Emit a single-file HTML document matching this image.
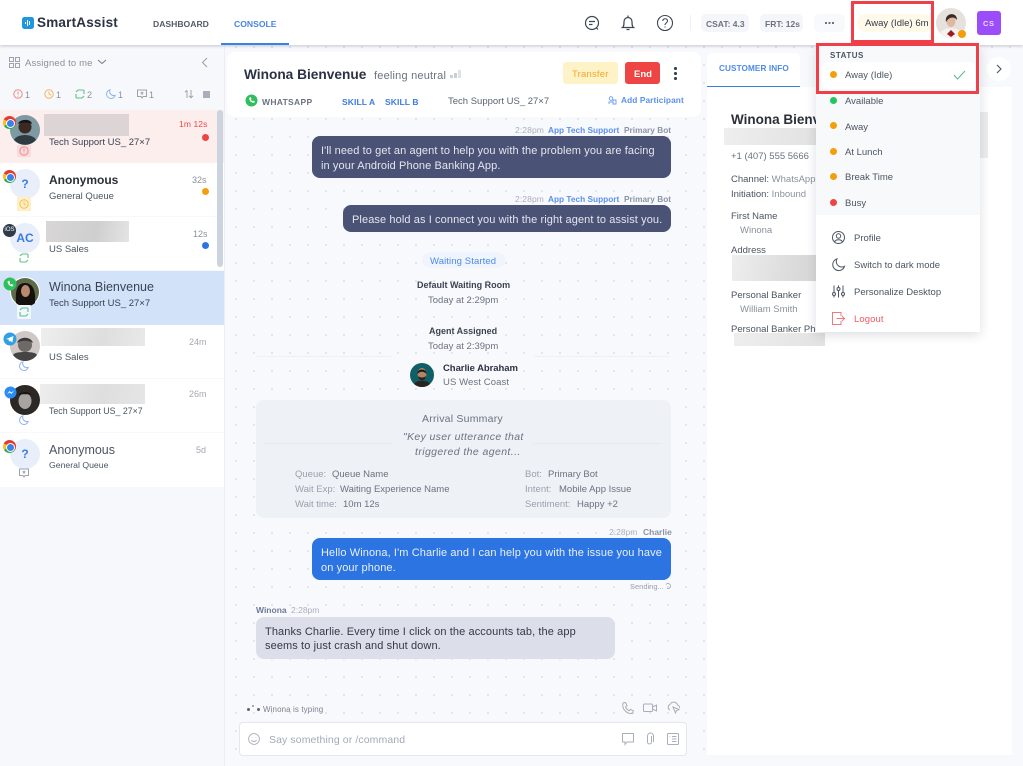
<!DOCTYPE html>
<html><head><meta charset="utf-8"><title>SmartAssist</title>
<style>
*{box-sizing:border-box}
html,body{margin:0;padding:0;width:1023px;height:766px;overflow:hidden;background:#f8f9fc;font-family:"Liberation Sans",sans-serif;color:#4b5563}
body{filter:blur(.3px)}
.a{position:absolute}
.t{position:absolute;white-space:nowrap;line-height:14px;height:14px;font-size:10px;margin-top:1px}
.b{font-weight:bold}
svg{position:absolute;overflow:visible;fill:none}
.c{position:absolute;width:13px;height:13px;border-radius:50%;background:conic-gradient(#e33b2e 0 33%,#2fa84f 33% 66%,#f8c022 66% 83%,#e33b2e 83%)}
.c:after{content:"";position:absolute;left:3px;top:3px;width:7px;height:7px;border-radius:50%;background:#3b82e6;border:1.2px solid #fff}
.blur{position:absolute;background:linear-gradient(100deg,#e9e9ea,#d8d8d8 50%,#ededed)}
.av{position:absolute;width:30px;height:30px;border-radius:50%;background:#e8effb;color:#3b7be0;text-align:center;line-height:30px;font-weight:bold}
.dot{position:absolute;width:7px;height:7px;border-radius:50%}
.g{color:#8a919e}
.msg{font-size:11px;letter-spacing:.1px}
</style></head><body>

<!-- chat background -->
<div class="a" style="left:226px;top:45px;width:797px;height:721px;background-color:#f8f9fc;background-image:radial-gradient(circle at 1px 1px,#dcdfe7 .8px,transparent 1.1px);background-size:18px 18px;background-position:9px 1px"></div>

<!-- left panel -->
<div class="a" style="left:0;top:45px;width:225px;height:721px;background:#f7f8fb;border-right:1px solid #eceef3"></div>
<svg style="left:9px;top:57px" width="12" height="12" stroke="#9ca3af" stroke-width="1"><rect x=".5" y=".5" width="4" height="4"/><rect x="6.5" y=".5" width="4" height="4"/><rect x=".5" y="6.5" width="4" height="4"/><rect x="6.5" y="6.5" width="4" height="4"/></svg>
<div class="t g" style="left:25px;top:55px;font-size:9.5px;letter-spacing:.15px;margin-top:2px">Assigned to me</div>
<svg style="left:97px;top:59px" width="10" height="6" stroke="#7b8290" stroke-width="1.1"><path d="M1 1l4 3.5L9 1"/></svg>
<svg style="left:201px;top:57px" width="7" height="11" stroke="#9ca3af" stroke-width="1.1"><path d="M6 1L1.5 5.5 6 10"/></svg>

<svg style="left:13px;top:89px" width="10" height="10" stroke="#f08a8a" stroke-width="1"><circle cx="5" cy="5" r="4.2"/><path d="M5 2.5v3M5 6.8v.8"/></svg>
<div class="t g" style="left:25px;top:87px;font-size:9px">1</div>
<svg style="left:44px;top:89px" width="10" height="10" stroke="#f4b45c" stroke-width="1"><circle cx="5" cy="5" r="4.2"/><path d="M5 2.5V5l2 1.2"/></svg>
<div class="t g" style="left:56px;top:87px;font-size:9px">1</div>
<svg style="left:75px;top:89px" width="10" height="10" stroke="#5cc184" stroke-width="1.1"><path d="M3 1h5a1 1 0 0 1 1 1v3M7 9H2a1 1 0 0 1-1-1V5M1 3l2-2M7 9l2-2"/></svg>
<div class="t g" style="left:87px;top:87px;font-size:9px">2</div>
<svg style="left:106px;top:89px" width="10" height="10" stroke="#8fb3ef" stroke-width="1"><path d="M4 .8a4.4 4.4 0 1 0 5.2 5.6A4.2 4.2 0 0 1 4 .8z"/></svg>
<div class="t g" style="left:118px;top:87px;font-size:9px">1</div>
<svg style="left:137px;top:89px" width="10" height="10" stroke="#9ca3af" stroke-width="1"><path d="M.5 1h9v6.5H6L5 9 4 7.5H.5zM3.8 3l2.4 2.4M6.2 3L3.8 5.4"/></svg>
<div class="t g" style="left:149px;top:87px;font-size:9px">1</div>
<svg style="left:184px;top:89px" width="10" height="10" stroke="#9ca3af" stroke-width="1"><path d="M3 9V1.5M1 3.2l2-2M7 1v7.5M5 6.8l2 2 2-2"/></svg>
<div class="a" style="left:203px;top:91px;width:7px;height:7px;background:#a9afba"></div>

<!-- rows -->
<div class="a" style="left:0;top:110px;width:224px;height:53px;background:#fdeeee"></div>
<div class="a" style="left:0;top:163px;width:224px;height:53px;background:#fff"></div>
<div class="a" style="left:0;top:217px;width:224px;height:53px;background:#fff"></div>
<div class="a" style="left:0;top:271px;width:224px;height:54px;background:#d2e2f9"></div>
<div class="a" style="left:0;top:325px;width:224px;height:53px;background:#fff"></div>
<div class="a" style="left:0;top:379px;width:224px;height:53px;background:#fff"></div>
<div class="a" style="left:0;top:433px;width:224px;height:54px;background:#fff"></div>
<div class="a" style="left:217px;top:110px;width:6px;height:157px;border-radius:3px;background:#ccd4df"></div>

<!-- row 1 -->
<svg style="left:10px;top:115px" width="30" height="30"><circle cx="15" cy="15" r="15" fill="#7d9aa3"/><path d="M4 25c1-3 6-5 11-5s10 2 11 5a15 15 0 0 1-22 0z" fill="#2e3b40"/><circle cx="15" cy="12" r="6.5" fill="#3c2a22"/><path d="M8 9c1-5 13-6 14 0-3-2-11-2-14 0z" fill="#141414"/></svg>
<div class="c" style="left:3px;top:116px"></div>
<div class="a" style="left:17px;top:145px;width:14px;height:12px;background:#fbdcdc"></div>
<svg style="left:19px;top:146px" width="10" height="10" stroke="#ef8a8a"><circle cx="5" cy="5" r="4.2"/><path d="M5 2.5v3M5 6.8v.8"/></svg>
<div class="blur" style="left:44px;top:114px;width:85px;height:22px;background:#ddd5d5"></div>
<div class="t" style="left:49px;top:135px;font-size:9.5px;color:#374151">Tech Support US_ 27×7</div>
<div class="t" style="left:179px;top:116px;font-size:8.5px;color:#ef4444;letter-spacing:.1px">1m 12s</div>
<div class="dot" style="left:202px;top:134px;background:#ef4444"></div>

<!-- row 2 -->
<div class="av" style="left:10px;top:169px;font-size:12px">?</div>
<div class="c" style="left:3px;top:170px"></div>
<div class="a" style="left:17px;top:197px;width:14px;height:14px;background:#fdf0c8"></div>
<svg style="left:19px;top:199px" width="10" height="10" stroke="#f5c04f"><circle cx="5" cy="5" r="4.2"/><path d="M5 2.5V5l2 1.2"/></svg>
<div class="t b" style="left:49px;top:172px;font-size:12px;color:#2b2f38">Anonymous</div>
<div class="t" style="left:49px;top:189px;font-size:9.5px;color:#4b5563">General Queue</div>
<div class="t g" style="left:192px;top:172px;font-size:9px">32s</div>
<div class="dot" style="left:202px;top:188px;background:#f59e0b"></div>

<!-- row 3 -->
<div class="av" style="left:10px;top:223px;font-size:12px">AC</div>
<div class="a" style="left:3px;top:224px;width:13px;height:13px;border-radius:50%;background:#2f3a4b;color:#fff;font-size:6px;line-height:13px;text-align:center">iOS</div>
<svg style="left:19px;top:253px" width="10" height="10" stroke="#5cc184" stroke-width="1.1"><path d="M3 1h5a1 1 0 0 1 1 1v3M7 9H2a1 1 0 0 1-1-1V5M1 3l2-2M7 9l2-2"/></svg>
<div class="blur" style="left:46px;top:221px;width:83px;height:21px;background:linear-gradient(100deg,#d8d6d6,#cfcfcf 60%,#e4e4e4)"></div>
<div class="t" style="left:49px;top:242px;font-size:9.5px;color:#4b5563">US Sales</div>
<div class="t g" style="left:193px;top:226px;font-size:9px">12s</div>
<div class="dot" style="left:202px;top:242px;background:#2b74e2"></div>

<!-- row 4 -->
<svg style="left:10px;top:277px" width="30" height="30"><circle cx="15" cy="15" r="15" fill="#fff"/><circle cx="15" cy="15" r="14" fill="#5d6b4a"/><path d="M6 26c-1-12 1-20 9-20s11 8 10 20a14 14 0 0 1-19 0z" fill="#15110f"/><ellipse cx="15.5" cy="14" rx="4.500" ry="6" fill="#b98a70"/></svg>
<svg style="left:3px;top:277px" width="14" height="14"><circle cx="7" cy="7" r="6.5" fill="#2fbf5c"/><path d="M4.5 4.5c.5 3 2 4.500 5 5l1-1.500-2-1-.8.7c-.6-.3-1-.8-1.300-1.400l.7-.8-1-2z" fill="#fff"/></svg>
<div class="a" style="left:17px;top:305px;width:14px;height:14px;background:#f2f7fd;border-radius:1px"></div>
<svg style="left:19px;top:307px" width="10" height="10" stroke="#5cc184" stroke-width="1.1"><path d="M3 1h5a1 1 0 0 1 1 1v3M7 9H2a1 1 0 0 1-1-1V5M1 3l2-2M7 9l2-2"/></svg>
<div class="t" style="left:49px;top:279px;font-size:12.5px;color:#3b4352">Winona Bienvenue</div>
<div class="t" style="left:49px;top:296px;font-size:9.5px;color:#374151">Tech Support US_ 27×7</div>

<!-- row 5 -->
<svg style="left:10px;top:331px" width="30" height="30"><circle cx="15" cy="15" r="15" fill="#cfc8c6"/><path d="M3 24c1-2 5-3 12-3s11 1 12 3a15 15 0 0 1-24 0z" fill="#444"/><circle cx="15" cy="14" r="7" fill="#6d6a68"/><path d="M7 12c2-7 14-7 16 0-4-3-12-3-16 0z" fill="#3b3937"/></svg>
<svg style="left:3px;top:332px" width="14" height="14"><circle cx="7" cy="7" r="6.500" fill="#2f9fe6"/><path d="M3 7l7.500-3-1.200 6.500-2.300-1.700-1 1-.3-2.300z" fill="#fff"/></svg>
<svg style="left:19px;top:361px" width="10" height="10" stroke="#8fb3ef"><path d="M4 .8a4.400 4.400 0 1 0 5.200 5.600A4.200 4.200 0 0 1 4 .8z"/></svg>
<div class="blur" style="left:41px;top:328px;width:104px;height:18px;background:linear-gradient(100deg,#eee,#dedede 60%,#e9e9e9)"></div>
<div class="t" style="left:49px;top:350px;font-size:9.5px;color:#4b5563">US Sales</div>
<div class="t" style="left:189px;top:334px;font-size:9px;color:#a3a8b2">24m</div>

<!-- row 6 -->
<svg style="left:10px;top:385px" width="30" height="30"><circle cx="15" cy="15" r="15" fill="#2c2826"/><ellipse cx="15" cy="16" rx="6.500" ry="8" fill="#a8a4a2"/><path d="M8 10c3-4 11-4 14 0-4-1-10-1-14 0z" fill="#1a1816"/></svg>
<svg style="left:4px;top:386px" width="13" height="13"><circle cx="6.500" cy="6.500" r="6" fill="#2a8cf5"/><path d="M3 8l2.500-3 1.800 1.500L10 4.500 7.500 8 5.700 6.500z" fill="#fff"/></svg>
<svg style="left:19px;top:415px" width="10" height="10" stroke="#8fb3ef"><path d="M4 .8a4.400 4.400 0 1 0 5.200 5.600A4.200 4.200 0 0 1 4 .8z"/></svg>
<div class="blur" style="left:40px;top:384px;width:105px;height:20px;background:linear-gradient(100deg,#ededed,#dedede 60%,#e6e6e6)"></div>
<div class="t" style="left:49px;top:403px;font-size:8.8px;color:#4b5563">Tech Support US_ 27×7</div>
<div class="t" style="left:189px;top:386px;font-size:9px;color:#a3a8b2">26m</div>

<!-- row 7 -->
<div class="av" style="left:10px;top:439px;font-size:12px">?</div>
<div class="c" style="left:3px;top:440px"></div>
<svg style="left:19px;top:468px" width="10" height="10" stroke="#9ca3af"><path d="M.5 1h9v6.500H6L5 9 4 7.500H.5zM3.800 3l2.400 2.400M6.200 3L3.800 5.400"/></svg>
<div class="t" style="left:49px;top:442px;font-size:12.5px;color:#4b5563">Anonymous</div>
<div class="t" style="left:49px;top:457px;font-size:8.7px;color:#4b5563">General Queue</div>
<div class="t" style="left:196px;top:442px;font-size:9px;color:#a3a8b2">5d</div>

<!-- chat header -->
<div class="a" style="left:227px;top:52px;width:474px;height:65px;background:#fff;border-radius:8px"></div>
<div class="t b" style="left:244px;top:67px;font-size:13.7px;color:#2b3244">Winona Bienvenue</div>
<div class="t" style="left:374px;top:68px;font-size:11px;letter-spacing:.2px;color:#6b7280">feeling neutral</div>
<div class="a" style="left:450px;top:75px;width:3px;height:3px;background:#c9cfdb"></div>
<div class="a" style="left:454px;top:73px;width:3px;height:5px;background:#c9cfdb"></div>
<div class="a" style="left:458px;top:70px;width:3px;height:8px;background:#dfe3ea"></div>
<div class="a" style="left:563px;top:62px;width:55px;height:22px;background:#fef3c7;border-radius:3px"></div>
<div class="t" style="left:572px;top:67px;font-size:9.5px;color:#f5a623;letter-spacing:.2px">Transfer</div>
<div class="a" style="left:625px;top:62px;width:35px;height:22px;background:#ef4444;border-radius:3px"></div>
<div class="t b" style="left:634px;top:67px;font-size:9.5px;color:#fff">End</div>
<div class="a" style="left:674px;top:67px;width:2.5px;height:2.5px;background:#374151;border-radius:50%;box-shadow:0 5px 0 #374151,0 10px 0 #374151"></div>
<svg style="left:245px;top:94px" width="13" height="13"><circle cx="6.500" cy="6.500" r="6" fill="#2fbf5c"/><path d="M4 4c.5 3 2 4.500 5 5l1-1.500-2-1-.8.700c-.6-.3-1-.8-1.300-1.400l.7-.8-1-2z" fill="#fff"/></svg>
<div class="t b" style="left:262px;top:94px;font-size:8.5px;letter-spacing:.3px;color:#6b7280">WHATSAPP</div>
<div class="t b" style="left:342px;top:94px;font-size:8.5px;letter-spacing:.1px;color:#3b7be0">SKILL A</div>
<div class="t b" style="left:385px;top:94px;font-size:8.5px;letter-spacing:.1px;color:#3b7be0">SKILL B</div>
<div class="t" style="left:448px;top:94px;font-size:9.5px;color:#5b6472">Tech Support US_ 27×7</div>
<svg style="left:608px;top:96px" width="9" height="9" stroke="#6f9de8" stroke-width=".9"><circle cx="3" cy="2.500" r="1.800"/><path d="M1 8V6h3.500M5 4h3v4H5z"/></svg>
<div class="t b" style="left:621px;top:92px;font-size:8.3px;letter-spacing:.1px;color:#5b91ea">Add Participant</div>

<!-- messages -->
<div class="t" style="left:515px;top:122px;font-size:8.5px;color:#a9afc0;letter-spacing:.1px">2:28pm</div>
<div class="t b" style="left:548px;top:122px;font-size:8.3px;color:#5b91ea">App Tech Support</div>
<div class="t b" style="left:624px;top:122px;font-size:8.3px;color:#8b93a8">Primary Bot</div>
<div class="a" style="left:312px;top:136px;width:359px;height:42px;background:#4a5275;border-radius:8px"></div>
<div class="t msg" style="left:321px;top:143px;color:#e4e6ef">I'll need to get an agent to help you with the problem you are facing</div>
<div class="t msg" style="left:321px;top:158px;color:#e4e6ef">in your Android Phone Banking App.</div>

<div class="t" style="left:515px;top:191px;font-size:8.5px;color:#a9afc0;letter-spacing:.1px">2:28pm</div>
<div class="t b" style="left:548px;top:191px;font-size:8.3px;color:#5b91ea">App Tech Support</div>
<div class="t b" style="left:624px;top:191px;font-size:8.3px;color:#8b93a8">Primary Bot</div>
<div class="a" style="left:343px;top:205px;width:328px;height:27px;background:#4a5275;border-radius:8px"></div>
<div class="t msg" style="left:352px;top:212px;color:#e4e6ef">Please hold as I connect you with the right agent to assist you.</div>

<div class="a" style="left:422px;top:252px;width:83px;height:16px;background:#eff4fd;border-radius:8px"></div>
<div class="t" style="left:430px;top:254px;font-size:9.5px;color:#4e8aea;letter-spacing:.1px">Waiting Started</div>
<div class="t b" style="left:417px;top:277px;font-size:9px;color:#3b4352">Default Waiting Room</div>
<div class="t" style="left:428px;top:293px;font-size:9.5px;color:#6b7280">Today at 2:29pm</div>
<div class="t b" style="left:429px;top:323px;font-size:9px;color:#3b4352">Agent Assigned</div>
<div class="t" style="left:428px;top:339px;font-size:9.5px;color:#6b7280">Today at 2:39pm</div>
<div class="a" style="left:256px;top:356px;width:136px;height:1px;background:#eef0f4"></div>
<div class="a" style="left:534px;top:356px;width:136px;height:1px;background:#eef0f4"></div>
<svg style="left:410px;top:363px" width="24" height="24"><circle cx="12" cy="12" r="12" fill="#0e5f66"/><path d="M4 21c2-3 5-3 8-3s6 0 8 3a12 12 0 0 1-16 0z" fill="#2b2320"/><ellipse cx="12" cy="11" rx="4.500" ry="6" fill="#b08468"/><path d="M7.500 11c-.5-6 9.500-6 9 0-2-3-7-3-9 0z" fill="#1f1a18"/><path d="M8 13c1 6 7 6 8 0-2 2-6 2-8 0z" fill="#2b2320"/></svg>
<div class="t b" style="left:443px;top:361px;font-size:9.5px;color:#2b3244;letter-spacing:-.05px">Charlie Abraham</div>
<div class="t" style="left:443px;top:375px;font-size:9.5px;color:#6b7280;letter-spacing:.1px">US West Coast</div>

<div class="a" style="left:256px;top:400px;width:415px;height:118px;background:#eef1f6;border-radius:8px"></div>
<div class="t" style="left:422px;top:411px;font-size:10.5px;color:#6b7280;letter-spacing:.22px">Arrival Summary</div>
<div class="a" style="left:264px;top:443px;width:128px;height:1px;background:#e6e9ef"></div>
<div class="a" style="left:534px;top:443px;width:128px;height:1px;background:#e6e9ef"></div>
<div class="t" style="left:403px;top:429px;font-size:10.5px;font-style:italic;color:#6b7280;letter-spacing:.35px">"Key user utterance that</div>
<div class="t" style="left:415px;top:444px;font-size:10.5px;font-style:italic;color:#6b7280;letter-spacing:.4px">triggered the agent...</div>
<div class="t" style="left:295px;top:467px;font-size:9.5px;color:#9aa1ad">Queue:</div><div class="t" style="left:332px;top:467px;font-size:9.5px;color:#6b7280">Queue Name</div>
<div class="t" style="left:295px;top:482px;font-size:9.5px;color:#9aa1ad">Wait Exp:</div><div class="t" style="left:340px;top:482px;font-size:9.5px;color:#6b7280">Waiting Experience Name</div>
<div class="t" style="left:295px;top:497px;font-size:9.5px;color:#9aa1ad">Wait time:</div><div class="t" style="left:343px;top:497px;font-size:9.5px;color:#6b7280">10m 12s</div>
<div class="t" style="left:525px;top:467px;font-size:9.5px;color:#9aa1ad">Bot:</div><div class="t" style="left:548px;top:467px;font-size:9.5px;color:#6b7280">Primary Bot</div>
<div class="t" style="left:525px;top:482px;font-size:9.5px;color:#9aa1ad">Intent:</div><div class="t" style="left:559px;top:482px;font-size:9.5px;color:#6b7280">Mobile App Issue</div>
<div class="t" style="left:525px;top:497px;font-size:9.5px;color:#9aa1ad">Sentiment:</div><div class="t" style="left:577px;top:497px;font-size:9.5px;color:#6b7280">Happy +2</div>

<div class="t" style="left:609px;top:524px;font-size:8.5px;color:#a9afc0">2:28pm</div>
<div class="t b" style="left:643px;top:524px;font-size:8.5px;color:#8b93a8">Charlie</div>
<div class="a" style="left:312px;top:538px;width:359px;height:42px;background:#2b74e2;border-radius:8px"></div>
<div class="t msg" style="left:321px;top:545px;color:#e8f0fd">Hello Winona, I'm Charlie and I can help you with the issue you have</div>
<div class="t msg" style="left:321px;top:560px;color:#e8f0fd">on your phone.</div>
<div class="t" style="left:630px;top:579px;font-size:7.5px;color:#9aa1ad">Sending...</div>
<svg style="left:665px;top:583px" width="6" height="6" stroke="#9aa1ad" stroke-width=".8"><path d="M1 1.500a2.500 2.500 0 1 1 1 3.800"/></svg>
<div class="t b" style="left:256px;top:602px;font-size:8.5px;color:#717a97">Winona</div>
<div class="t" style="left:291px;top:602px;font-size:8.5px;color:#a9afc0">2:28pm</div>
<div class="a" style="left:256px;top:617px;width:359px;height:42px;background:#dcdfea;border-radius:8px"></div>
<div class="t msg" style="left:265px;top:624px;color:#343948">Thanks Charlie. Every time I click on the accounts tab, the app</div>
<div class="t msg" style="left:265px;top:638px;color:#343948">seems to just crash and shut down.</div>

<!-- typing + composer -->
<div class="a" style="left:247px;top:708px;width:3px;height:3px;border-radius:50%;background:#5b6472"></div>
<div class="a" style="left:252px;top:705px;width:2px;height:2px;border-radius:50%;background:#8a919e"></div>
<div class="a" style="left:257px;top:708px;width:3px;height:3px;border-radius:50%;background:#5b6472"></div>
<div class="t" style="left:263px;top:702px;font-size:8px;color:#7b8290;letter-spacing:.1px">Winona is typing</div>
<svg style="left:621px;top:702px" width="13" height="13" stroke="#a9afba"><path d="M2 1l2.500-.5 1.500 3-1.500 1.500c.8 1.800 2 3 3.800 3.800L9.300 7.300l3 1.500-.5 2.500C6 12.500 .5 7 2 1z"/></svg>
<svg style="left:643px;top:703px" width="14" height="10" stroke="#a9afba"><rect x=".5" y="1" width="9" height="7.500" rx="1"/><path d="M9.500 4l4-2v6l-4-2"/></svg>
<svg style="left:667px;top:701px" width="13" height="13" stroke="#a9afba"><path d="M3 9a3 3 0 0 1 0-5.500A4 4 0 0 1 10.500 4 2.700 2.700 0 0 1 12.500 7M6 6l6 2.500-2.500 1L8.500 12z"/></svg>
<div class="a" style="left:239px;top:722px;width:448px;height:34px;background:#fff;border:1px solid #e4e7ee;border-radius:4px"></div>
<svg style="left:248px;top:733px" width="12" height="12" stroke="#a9afba" stroke-width=".9"><circle cx="6" cy="6" r="5.400"/><path d="M3.500 7c1 2 4 2 5 0M4 4.500v.5M8 4.500v.5"/></svg>
<div class="t" style="left:269px;top:732px;font-size:10.5px;color:#a3a9b8;letter-spacing:.1px">Say something or /command</div>
<svg style="left:622px;top:733px" width="12" height="12" stroke="#a9afba"><path d="M.5 .5h11v8.500H5L3 11.500V9H.5z"/></svg>
<svg style="left:645px;top:733px" width="9" height="12" stroke="#a9afba"><path d="M6.500 3v6a2 2 0 0 1-4 0V3a3 3 0 0 1 6 0v6"/></svg>
<svg style="left:667px;top:733px" width="12" height="12" stroke="#a9afba"><rect x=".5" y=".5" width="11" height="11" rx="1"/><path d="M5 3.500h4.500M5 6h4.500M5 8.500h4.500M2.500 3.500h.6"/></svg>

<!-- right panel -->
<div class="a" style="left:707px;top:53px;width:305px;height:702px;background:#fff"></div>
<div class="a" style="left:707px;top:53px;width:108px;height:34px;background:#f8f9fc"></div>
<div class="a" style="left:707px;top:53px;width:93px;height:34px;background:#fff;border-bottom:1px solid #3b7be0;border-radius:6px 6px 0 0"></div>
<div class="t b" style="left:719px;top:61px;font-size:8.2px;color:#4e8aea;letter-spacing:.1px">CUSTOMER INFO</div>
<div class="a" style="left:816px;top:53px;width:196px;height:34px;background:#f8f9fc"></div>
<div class="a" style="left:987px;top:57px;width:24px;height:24px;border-radius:50%;background:#fff"></div>
<svg style="left:996px;top:64px" width="6" height="10" stroke="#4b5563" stroke-width="1.100"><path d="M1 1l4 4-4 4"/></svg>
<div class="t b" style="left:731px;top:112px;font-size:13.5px;color:#2b2f38">Winona Bienv</div>
<div class="blur" style="left:724px;top:128px;width:92px;height:17px;background:linear-gradient(100deg,#eee,#e2e2e2)"></div>
<div class="a" style="left:978px;top:112px;width:10px;height:46px;background:#ececec"></div>
<div class="t" style="left:731px;top:149px;font-size:9.5px;color:#6b7280">+1 (407) 555 5666</div>
<div class="t" style="left:731px;top:172px;font-size:9.5px;color:#4b5563">Channel: <span style="color:#8a919e">WhatsApp</span></div>
<div class="t" style="left:731px;top:187px;font-size:9.5px;color:#4b5563">Initiation: <span style="color:#8a919e">Inbound</span></div>
<div class="t" style="left:731px;top:209px;font-size:9.5px;color:#4b5563">First Name</div>
<div class="t" style="left:740px;top:223px;font-size:9.5px;color:#8a919e">Winona</div>
<div class="t" style="left:731px;top:243px;font-size:9.5px;color:#4b5563">Address</div>
<div class="blur" style="left:732px;top:255px;width:84px;height:26px;background:linear-gradient(100deg,#eee,#d9d9d9 80%)"></div>
<div class="t" style="left:731px;top:288px;font-size:9.5px;color:#4b5563">Personal Banker</div>
<div class="t" style="left:740px;top:302px;font-size:9.5px;color:#8a919e">William Smith</div>
<div class="t" style="left:731px;top:322px;font-size:9.5px;color:#4b5563">Personal Banker Phone</div>
<div class="blur" style="left:734px;top:333px;width:91px;height:13px;background:linear-gradient(100deg,#eee,#e2e2e2)"></div>

<!-- header -->
<div class="a" style="left:0;top:0;width:1023px;height:45px;background:#fff;box-shadow:0 1px 3px rgba(60,70,90,.28)"></div>
<div class="a" style="left:22px;top:17px;width:12px;height:12px;border-radius:2.5px;background:#1f97e0"></div>
<div class="a" style="left:25px;top:22px;width:1px;height:2px;background:#fff"></div>
<div class="a" style="left:27px;top:20px;width:1px;height:6px;background:#fff"></div>
<div class="a" style="left:29px;top:21px;width:1px;height:4px;background:#fff"></div>
<div class="t b" style="left:37px;top:15px;font-size:13.5px;letter-spacing:.2px;color:#2b3244">SmartAssist</div>
<div class="t b" style="left:153px;top:16px;font-size:8.6px;color:#555c69">DASHBOARD</div>
<div class="t b" style="left:234px;top:16px;font-size:8.6px;color:#4a85de">CONSOLE</div>
<div class="a" style="left:221px;top:43px;width:68px;height:2px;background:#3b82e6"></div>

<svg style="left:584px;top:15px" width="16" height="16" stroke="#3f4654" stroke-width="1.200"><circle cx="8" cy="8" r="6.500"/><path d="M5 6.500h6M5 9.500h3.500M12 12.500l2 2"/></svg>
<svg style="left:621px;top:14px" width="14" height="18" stroke="#3f4654" stroke-width="1.200"><path d="M1.500 13.500c1.500-1 1.500-3 1.500-6a4 4 0 0 1 8 0c0 3 0 5 1.500 6zM5.500 15.500h3M7 3V1.500"/></svg>
<svg style="left:657px;top:15px" width="16" height="16" stroke="#3f4654" stroke-width="1.100"><circle cx="8" cy="8" r="7.500"/><path d="M5.800 6c0-3 4.700-3 4.700 0 0 2-2.500 2-2.500 4M8 11.500v1"/></svg>
<div class="a" style="left:690px;top:15px;width:1px;height:16px;background:#eef0f4"></div>
<div class="a" style="left:701px;top:14px;width:48px;height:18px;border-radius:5px;background:#f5f6f9"></div>
<div class="t b" style="left:706px;top:16px;font-size:8.5px;color:#6b7280">CSAT: 4.3</div>
<div class="a" style="left:760px;top:14px;width:43px;height:18px;border-radius:5px;background:#f5f6f9"></div>
<div class="t b" style="left:765px;top:16px;font-size:8.5px;color:#6b7280">FRT: 12s</div>
<div class="a" style="left:814px;top:14px;width:31px;height:18px;border-radius:5px;background:#f8f9fb"></div>
<div class="a" style="left:825px;top:22px;width:2px;height:2px;background:#6b7280;box-shadow:3.5px 0 0 #6b7280,7px 0 0 #6b7280"></div>
<div class="a" style="left:857px;top:14px;width:76px;height:18px;border-radius:9px;background:#fef9e8"></div>
<div class="t" style="left:865px;top:16px;font-size:9.5px;color:#343948;letter-spacing:.03px">Away (Idle) 6m</div>
<svg style="left:936px;top:8px" width="30" height="30"><circle cx="15" cy="15" r="15" fill="#e6e1dd"/><path d="M4 25c2-3 6-5 11-5s9 2 11 5a15 15 0 0 1-22 0z" fill="#f4f1ee"/><ellipse cx="15" cy="13" rx="4.500" ry="6" fill="#e0b7a3"/><path d="M10 14c-2-9 11-11 11-2-3-4-8-3-11 2z" fill="#3a2a24"/><path d="M11 26l4-4 4 4-4 3z" fill="#9c1c22"/></svg>
<div class="a" style="left:958px;top:30px;width:8px;height:8px;border-radius:50%;background:#f59e0b"></div>
<div class="a" style="left:977px;top:11px;width:24px;height:24px;border-radius:3px;background:#9b4dfb"></div>
<div class="t b" style="left:983px;top:16px;font-size:7.5px;color:#ecdcff;letter-spacing:.6px">CS</div>

<!-- dropdown -->
<div class="a" style="left:816px;top:45px;width:164px;height:287px;background:#fff;box-shadow:0 3px 10px rgba(40,50,70,.16)"></div>
<div class="a" style="left:816px;top:45px;width:164px;height:170px;background:#f8f9fb"></div>
<div class="a" style="left:822px;top:62px;width:153px;height:27px;background:#fff;border-radius:6px"></div>
<div class="t b" style="left:830px;top:48px;font-size:8px;letter-spacing:.5px;color:#4b5563">STATUS</div>
<div class="dot" style="left:830px;top:71px;background:#f59e0b"></div>
<div class="t" style="left:845px;top:68px;font-size:9.5px;color:#4b5563">Away (Idle)</div>
<svg style="left:953px;top:70px" width="13" height="10" stroke="#5cb88a" stroke-width="1"><path d="M1 5l3.500 4L12 1"/></svg>
<div class="dot" style="left:830px;top:97px;background:#22c55e"></div>
<div class="t" style="left:845px;top:94px;font-size:9.5px;color:#4b5563">Available</div>
<div class="dot" style="left:830px;top:122px;background:#f59e0b"></div>
<div class="t" style="left:845px;top:120px;font-size:9.5px;color:#4b5563">Away</div>
<div class="dot" style="left:830px;top:148px;background:#f59e0b"></div>
<div class="t" style="left:845px;top:145px;font-size:9.5px;color:#4b5563">At Lunch</div>
<div class="dot" style="left:830px;top:173px;background:#f59e0b"></div>
<div class="t" style="left:845px;top:170px;font-size:9.5px;color:#4b5563">Break Time</div>
<div class="dot" style="left:830px;top:199px;background:#ef4444"></div>
<div class="t" style="left:845px;top:196px;font-size:9.5px;color:#4b5563">Busy</div>
<svg style="left:832px;top:231px" width="13" height="13" stroke="#4b5563" stroke-width="1"><circle cx="6.500" cy="6.500" r="6"/><circle cx="6.500" cy="5" r="2.200"/><path d="M2.500 11c1-3 7-3 8 0"/></svg>
<div class="t" style="left:854px;top:231px;font-size:9.5px;color:#4b5563">Profile</div>
<svg style="left:832px;top:258px" width="13" height="13" stroke="#4b5563" stroke-width="1"><path d="M5 .8a6 6 0 1 0 7.500 7.500A5.500 5.500 0 0 1 5 .8z"/></svg>
<div class="t" style="left:854px;top:258px;font-size:9.5px;color:#4b5563">Switch to dark mode</div>
<svg style="left:832px;top:285px" width="13" height="13" stroke="#4b5563" stroke-width="1"><path d="M2 .5v12M6.500 .5v12M11 .5v12"/><circle cx="2" cy="9" r="1.500" fill="#fff"/><circle cx="6.500" cy="4" r="1.500" fill="#fff"/><circle cx="11" cy="9" r="1.500" fill="#fff"/></svg>
<div class="t" style="left:854px;top:285px;font-size:9.5px;color:#4b5563">Personalize Desktop</div>
<svg style="left:832px;top:312px" width="13" height="13" stroke="#f2777f" stroke-width="1"><path d="M9 4V.5H.5v12H9V9M4.500 6.500h8M10 4l2.500 2.500L10 9"/></svg>
<div class="t" style="left:854px;top:312px;font-size:9.5px;color:#ef5a64;letter-spacing:.1px">Logout</div>

<!-- red annotation boxes -->
<div class="a" style="left:851px;top:1px;width:83px;height:42px;border:3px solid #ef4049"></div>
<div class="a" style="left:816px;top:43px;width:163px;height:51px;border:3px solid #ef4049"></div>
</body></html>
